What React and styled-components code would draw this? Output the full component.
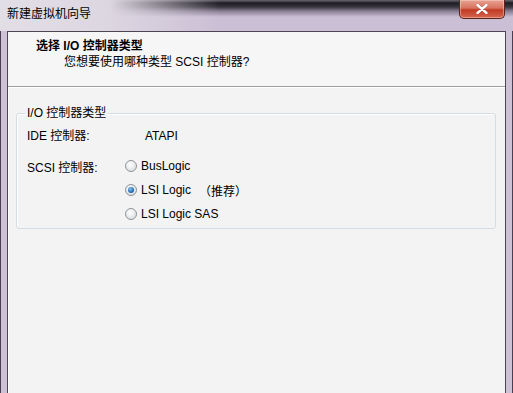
import styled, { createGlobalStyle } from 'styled-components';

const Global = createGlobalStyle`
  html, body { margin: 0; padding: 0; }
  body {
    width: 513px;
    height: 393px;
    overflow: hidden;
    font-family: "Liberation Sans", "Noto Sans CJK SC", sans-serif;
    font-size: 12px;
    color: #000;
  }
`;

const Window = styled.div`
  width: 513px;
  height: 393px;
  display: flex;
  flex-direction: column;
  background: #cdc1d6;
  box-shadow: inset 1px 0 #4a3f52, inset -1px 0 #4a3f52;
`;

const TitleBar = styled.div`
  height: 31px;
  flex-shrink: 0;
  display: flex;
  justify-content: space-between;
  align-items: flex-start;
  padding: 0 8px 0 7px;
  background:
    linear-gradient(to right, #e2dee6 0, #dcd6e1 110px, rgba(220,214,225,0) 220px),
    linear-gradient(to bottom, #6b6670 0, #1e1c22 3px, #3a3640 7px, rgba(90,80,100,0.6) 11px, rgba(200,188,212,0) 17px),
    #cbbfd5;
`;

const Title = styled.div`
  padding-top: 7px;
  line-height: 14px;
  font-size: 12px;
`;

const CloseButton = styled.div`
  width: 46px;
  height: 19px;
  box-sizing: border-box;
  border: 1px solid #5d2218;
  border-top: none;
  border-radius: 0 0 5px 5px;
  background: linear-gradient(to bottom, #e8a291 0, #d7735f 45%, #c23a24 55%, #d4664e 100%);
  box-shadow: inset 0 0 0 1px rgba(255,220,210,0.45);
  display: flex;
  align-items: center;
  justify-content: center;
`;

const Client = styled.div`
  flex: 1;
  margin: 0 7px;
  border: 1px solid #4e4554;
  border-bottom: none;
  background: #f3f3f3;
  display: flex;
  flex-direction: column;
  box-shadow: inset 1px 1px #ffffff;
`;

const Header = styled.div`
  height: 54px;
  flex-shrink: 0;
  background: #f6f6f6;
  border-bottom: 1px solid #a0a0a0;
  box-shadow: 0 1px 0 #ffffff;
  display: flex;
  flex-direction: column;
`;

const HeaderTitle = styled.div`
  margin: 6px 0 0 28px;
  line-height: 16px;
  font-weight: bold;
`;

const HeaderSub = styled.div`
  margin: 0 0 0 56px;
  line-height: 16px;
`;

const Body = styled.div`
  padding: 19px 9px 0 8px;
`;

const Group = styled.fieldset`
  margin: 0;
  padding: 0 10px 2px 8px;
  border: 1px solid #d5dde2;
  border-radius: 3px;
  box-shadow: inset 1px 1px #ffffff;
`;

const Legend = styled.legend`
  padding: 0 2px;
  line-height: 14px;
`;

const Grid = styled.div`
  display: grid;
  grid-template-columns: 98px 1fr;
  grid-auto-rows: 24px;
  padding-left: 2px;
  margin-top: ${p => p.$top}px;
`;

const Label = styled.div`
  display: flex;
  align-items: center;
  height: ${p => p.$h || 24}px;
`;

const Value = styled.div`
  display: flex;
  align-items: center;
  padding-left: 20px;
`;

const RadioRow = styled.div`
  display: flex;
  align-items: center;
  gap: 4px;
  grid-column: 2;
`;

const Radio = styled.span`
  width: 12px;
  height: 12px;
  box-sizing: border-box;
  border-radius: 50%;
  border: 1px solid #8e9499;
  background: radial-gradient(circle at 40% 35%, #ffffff 0, #e4e6e8 60%, #cfd3d6 100%);
  display: flex;
  align-items: center;
  justify-content: center;
  &::after {
    content: '';
    display: ${p => (p.$checked ? 'block' : 'none')};
    width: 6px;
    height: 6px;
    border-radius: 50%;
    background: radial-gradient(circle at 40% 35%, #8fc4ee 0, #2a70b8 55%, #0d3f80 100%);
  }
`;

const Note = styled.span`
  margin-left: 4px;
`;

const options = [
  { name: 'BusLogic' },
  { name: 'LSI Logic', checked: true, note: '（推荐）' },
  { name: 'LSI Logic SAS' },
];

export default function App() {
  return (
    <>
      <Global />
      <Window>
        <TitleBar>
          <Title>新建虚拟机向导</Title>
          <CloseButton>
            <svg width="12" height="10" viewBox="0 0 12 10">
              <path d="M1.5 1 L10.5 9 M10.5 1 L1.5 9" stroke="#5a1a10" strokeWidth="3.4" strokeLinecap="round" opacity="0.35" />
              <path d="M1.5 1 L10.5 9 M10.5 1 L1.5 9" stroke="#ffffff" strokeWidth="2.4" strokeLinecap="round" />
            </svg>
          </CloseButton>
        </TitleBar>
        <Client>
          <Header>
            <HeaderTitle>选择 I/O 控制器类型</HeaderTitle>
            <HeaderSub>您想要使用哪种类型 SCSI 控制器?</HeaderSub>
          </Header>
          <Body>
            <Group>
              <Legend>I/O 控制器类型</Legend>
              <Grid $top={4}>
                <Label $h={20}>IDE 控制器:</Label>
                <Value>ATAPI</Value>
              </Grid>
              <Grid $top={6}>
                <Label>SCSI 控制器:</Label>
                {options.map((o, i) => (
                  <RadioRow key={o.name} style={{ gridRow: i + 1 }}>
                    <Radio $checked={o.checked} />
                    <span>{o.name}</span>
                    {o.note && <Note>{o.note}</Note>}
                  </RadioRow>
                ))}
              </Grid>
            </Group>
          </Body>
        </Client>
      </Window>
    </>
  );
}
